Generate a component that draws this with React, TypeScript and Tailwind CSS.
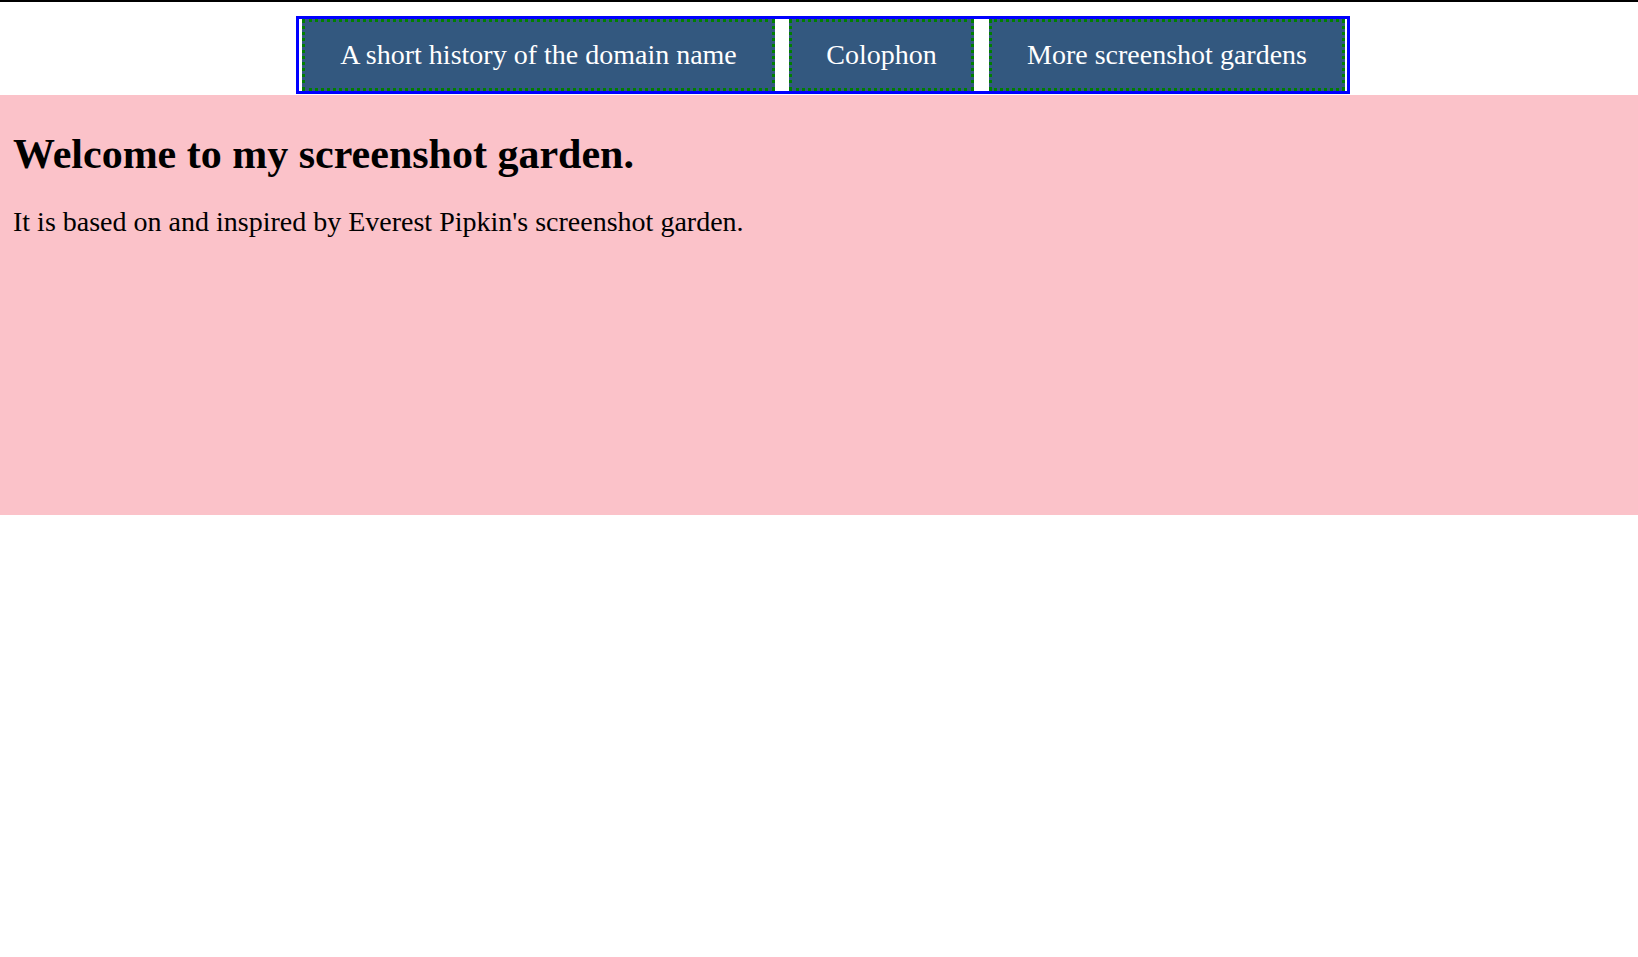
import React from 'react';

const links = [
  { label: 'A short history of the domain name', width: 'w-[473px]', gap: '' },
  { label: 'Colophon', width: 'w-[185px]', gap: 'ml-[14px]' },
  { label: 'More screenshot gardens', width: 'w-[356px]', gap: 'ml-[15px]' },
];

const App: React.FC = () => {
  return (
    <div className="min-h-screen bg-white border-t-2 border-black font-['Liberation_Serif',serif] text-black">
      {/* Nav */}
      <header className="flex justify-center pl-[8px] pt-[14px] pb-[1px]">
        <nav className="flex border-[3px] border-[#0000ff] pl-[3px] pr-[2px] bg-white">
          {links.map((link) => (
            <a
              key={link.label}
              href="#"
              className={`${link.width} ${link.gap} block text-center bg-[#33587f] border-[3px] border-dotted border-[#008000] py-[17px] text-[28px] leading-[32px] text-white whitespace-nowrap`}
            >
              {link.label}
            </a>
          ))}
        </nav>
      </header>

      {/* Garden */}
      <main className="h-[420px] bg-[#fbc2c9] px-[13px] pt-[35px]">
        <h1 className="text-[42px] leading-[48px] font-bold mb-[28px]">Welcome to my screenshot garden.</h1>
        <p className="text-[28px] leading-[32px]">It is based on and inspired by Everest Pipkin's screenshot garden.</p>
      </main>
    </div>
  );
};

export default App;
